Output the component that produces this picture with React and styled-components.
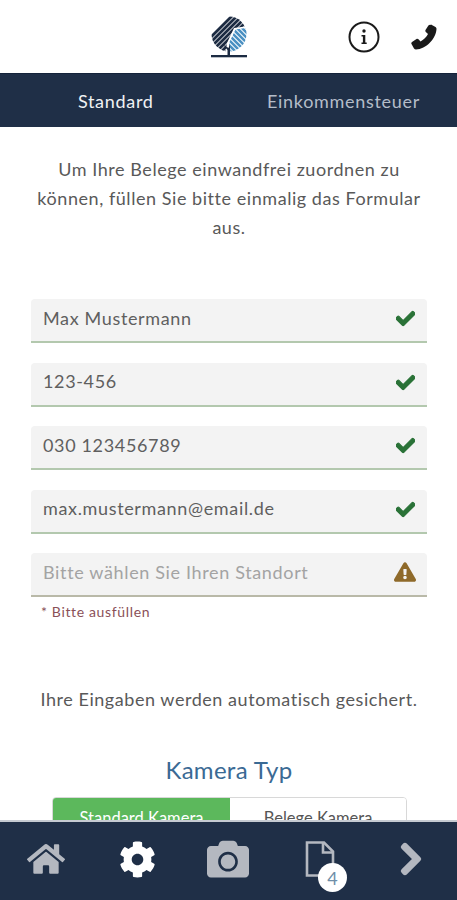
import React from 'react';
import styled, { createGlobalStyle } from 'styled-components';
import { FaHome, FaCog, FaCamera, FaChevronRight, FaCheck, FaExclamationTriangle } from 'react-icons/fa';

const GlobalStyle = createGlobalStyle`
  html, body {
    margin: 0;
    padding: 0;
    background: #fff;
  }
  * {
    box-sizing: border-box;
  }
`;

const Screen = styled.div`
  position: relative;
  width: 457px;
  height: 900px;
  overflow: hidden;
  background: #fff;
  font-family: Lato, 'Open Sans', sans-serif;
  color: #4a4a4a;
`;

const Header = styled.header`
  display: grid;
  grid-template-columns: 1fr auto 1fr;
  align-items: center;
  height: 73px;
  background: #fff;
`;

const HeaderActions = styled.div`
  display: flex;
  justify-content: flex-end;
  align-items: center;
  gap: 30px;
  padding-right: 19px;
`;

const Tabs = styled.nav`
  display: grid;
  grid-template-columns: 1fr 1fr;
  height: 54px;
  background: #1f2f47;
  border-top: 1px solid #14233a;
`;

const Tab = styled.div`
  display: flex;
  align-items: center;
  justify-content: ${({ $active }) => ($active ? 'center' : 'flex-end')};
  padding: ${({ $active }) => ($active ? '0 0 0 3px' : '0 37px 0 0')};
  font-size: 18px;
  letter-spacing: 0.7px;
  color: ${({ $active }) => ($active ? '#f0f2f4' : '#b4bdc9')};
  white-space: nowrap;
`;

const Content = styled.main`
  padding: 28px 30px 0 31px;
`;

const Intro = styled.p`
  margin: 0 0 57px;
  text-align: center;
  font-size: 18px;
  line-height: 29px;
  letter-spacing: 0.55px;
  color: #595959;
`;

const Fields = styled.div`
  display: flex;
  flex-direction: column;
  gap: 19.5px;
`;

const Field = styled.div`
  display: flex;
  align-items: center;
  justify-content: space-between;
  height: 44px;
  padding: 0 13px 5px 12px;
  background: #f3f3f3;
  border-bottom: 2px solid ${({ $warn }) => ($warn ? '#b9b9a8' : '#b3c8ae')};
  border-radius: 4px 4px 0 0;
  font-size: 18px;
  letter-spacing: 0.65px;
  color: ${({ $warn }) => ($warn ? '#a3a3a3' : '#5f5f5f')};
`;

const CheckIcon = styled(FaCheck)`
  width: 19px;
  height: 19px;
  margin: 2px -1px 0 0;
  color: #2a7237;
  stroke: #2a7237;
  stroke-width: 30px;
`;

const WarnIcon = styled(FaExclamationTriangle)`
  width: 22px;
  height: 22px;
  margin-right: -2px;
  color: #8f6a2a;
`;

const Hint = styled.div`
  margin: 6px 0 0 10px;
  font-size: 14px;
  letter-spacing: 0.65px;
  color: #8a5058;
`;

const AutoSave = styled.p`
  margin: 68px 0 0;
  text-align: center;
  font-size: 18px;
  letter-spacing: 0.55px;
  color: #595959;
`;

const SectionTitle = styled.h2`
  margin: 45px 0 0;
  text-align: center;
  font-size: 24px;
  font-weight: 400;
  letter-spacing: 0.3px;
  color: #3a6a94;
`;

const Segmented = styled.div`
  display: grid;
  grid-template-columns: 177px 1fr;
  margin: 13px 20px 0 21px;
  height: 40px;
  border: 1px solid #d8d8d8;
  border-radius: 4px;
  overflow: hidden;
`;

const Segment = styled.div`
  padding-top: 10px;
  text-align: center;
  font-size: 16.5px;
  background: ${({ $active }) => ($active ? '#5cb85c' : '#fff')};
  color: ${({ $active }) => ($active ? '#fff' : '#555')};
`;

const BottomBar = styled.nav`
  position: absolute;
  left: 0;
  right: 0;
  bottom: 0;
  display: grid;
  grid-template-columns: repeat(5, 1fr);
  align-items: center;
  height: 80px;
  padding-bottom: 4px;
  background: #1f2f47;
  border-top: 2px solid #c5cad1;
`;

const BarItem = styled.div`
  position: relative;
  display: flex;
  align-items: center;
  justify-content: center;
  color: ${({ $active }) => ($active ? '#fff' : '#b4b8c0')};
`;

const HeavyChevron = styled(FaChevronRight)`
  stroke: currentColor;
  stroke-width: 24px;
`;

const DocWrap = styled.div`
  position: relative;
  display: flex;
`;

const Badge = styled.span`
  position: absolute;
  right: -12px;
  bottom: -15px;
  display: flex;
  align-items: center;
  justify-content: center;
  width: 29px;
  height: 29px;
  border-radius: 50%;
  background: #fff;
  color: #6f8ea8;
  font-size: 18px;
`;

const Logo = () => (
  <svg width="40" height="44" viewBox="0 0 40 44">
    <defs>
      <clipPath id="crown">
        <circle cx="20" cy="19" r="17.5" />
      </clipPath>
      <clipPath id="crownDark">
        <path d="M0 0H40V11L25 13L18 28L16 40H0Z" />
      </clipPath>
      <clipPath id="crownBlue">
        <path d="M40 12.500L26.500 14.500L20 28L22 40H40Z" />
      </clipPath>
    </defs>
    <g clipPath="url(#crown)">
      <g clipPath="url(#crownDark)" stroke="#1c2b42" strokeWidth="2.800">
        {[-12, -7, -2, 3, 8, 13, 18, 23, 28, 33, 38].map((o) => (
          <line key={o} x1={o - 8} y1="44" x2={o + 38} y2="-2" />
        ))}
      </g>
      <g clipPath="url(#crownBlue)" stroke="#4a90c2" strokeWidth="2.600">
        {[-16, -11, -6, -1, 4, 9, 14, 19, 24, 29].map((o) => (
          <line key={o} x1={o} y1="4" x2={o + 40} y2="44" />
        ))}
      </g>
    </g>
    <path d="M18.500 41V35L14 29.500L19.500 33L21 29V41Z" fill="#1c2b42" />
    <rect x="2" y="40" width="36" height="2.300" fill="#1c2b42" />
  </svg>
);

const InfoIcon = () => (
  <svg width="32" height="32" viewBox="0 0 32 32">
    <circle cx="16" cy="16" r="14.500" fill="none" stroke="#1a1a1a" strokeWidth="2" />
    <circle cx="16" cy="10" r="1.700" fill="#1a1a1a" />
    <path d="M13.500 14h3.800v7.500h1.400v1.500h-5.200v-1.500h1.400v-6h-1.400z" fill="#1a1a1a" />
  </svg>
);

const PhoneIcon = () => (
  <svg width="28" height="28" viewBox="0 0 28 28">
    <path
      d="M21 1.500l4.500 2.500c.8.500 1 1.200 1 2C26 16 16 26 6 26.500c-.8 0-1.500-.3-2-1L1.500 21c-.4-.8-.2-1.600.5-2.100l4.500-2.900c.7-.4 1.400-.3 2 .3l2 2.200c3-1.500 6-4.500 7.500-7.500l-2.200-2c-.6-.6-.7-1.300-.3-2l2.900-4.500c.5-.7 1.800-.9 2.600-.5z"
      fill="#1a1a1a"
    />
  </svg>
);

const DocIcon = () => (
  <svg width="30" height="36" viewBox="0 0 30 36">
    <path
      d="M2 1.500h17L28 10.500V34.500H2z"
      fill="none"
      stroke="#b4b8c0"
      strokeWidth="2.600"
    />
    <path d="M18 1.500V11.500H28" fill="none" stroke="#b4b8c0" strokeWidth="2.600" />
  </svg>
);

const fields = ['Max Mustermann', '123-456', '030 123456789', 'max.mustermann@email.de'];

export default function App() {
  return (
    <Screen>
      <GlobalStyle />
      <Header>
        <div />
        <Logo />
        <HeaderActions>
          <InfoIcon />
          <PhoneIcon />
        </HeaderActions>
      </Header>
      <Tabs>
        <Tab $active>Standard</Tab>
        <Tab>Einkommensteuer</Tab>
      </Tabs>
      <Content>
        <Intro>
          Um Ihre Belege einwandfrei zuordnen zu können, füllen Sie bitte einmalig das Formular aus.
        </Intro>
        <Fields>
          {fields.map((value) => (
            <Field key={value}>
              {value}
              <CheckIcon />
            </Field>
          ))}
          <div>
            <Field $warn>
              Bitte wählen Sie Ihren Standort
              <WarnIcon />
            </Field>
            <Hint>* Bitte ausfüllen</Hint>
          </div>
        </Fields>
        <AutoSave>Ihre Eingaben werden automatisch gesichert.</AutoSave>
        <SectionTitle>Kamera Typ</SectionTitle>
        <Segmented>
          <Segment $active>Standard Kamera</Segment>
          <Segment>Belege Kamera</Segment>
        </Segmented>
      </Content>
      <BottomBar>
        <BarItem><FaHome size={38} /></BarItem>
        <BarItem $active><FaCog size={37} /></BarItem>
        <BarItem><FaCamera size={42} /></BarItem>
        <BarItem>
          <DocWrap>
            <DocIcon />
            <Badge>4</Badge>
          </DocWrap>
        </BarItem>
        <BarItem><HeavyChevron size={36} /></BarItem>
      </BottomBar>
    </Screen>
  );
}
